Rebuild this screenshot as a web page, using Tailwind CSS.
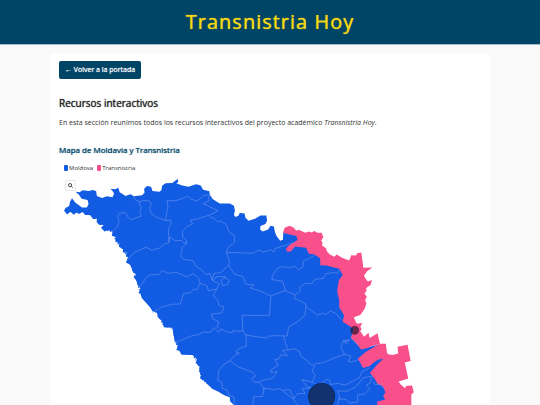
<!DOCTYPE html>
<html lang="es">
<head>
<meta charset="utf-8">
<meta name="viewport" content="width=device-width, initial-scale=1">
<title>Transnistria Hoy</title>
<script src="https://cdn.jsdelivr.net/npm/@tailwindcss/browser@4"></script>
</head>
<body class="bg-[#f9f9f9] font-['Open_Sans','Noto_Sans',sans-serif] text-[#333] overflow-x-hidden">
<header class="bg-[#004466] border-b border-[#a3bccb] h-[45px] flex items-center justify-center">
  <h1 class="text-[20px] leading-7 font-medium tracking-[1px] text-[#f6d915] [text-shadow:0_0_1px_currentColor]">Transnistria Hoy</h1>
</header>
<main class="mx-[50px] mt-2 p-2 pl-[9px] bg-white rounded-[4px]">
  <a href="#" class="flex w-fit items-center h-[18px] px-[6px] rounded-[2px] bg-[#004466] text-white text-[7px] font-medium [text-shadow:0_0_1px_currentColor]">← Volver a la portada</a>
  <h2 class="mt-4 text-[10px] leading-4 font-medium text-[#222] [text-shadow:0_0_1px_currentColor]">Recursos interactivos</h2>
  <p class="mt-[6px] text-[7px] leading-3">En esta sección reunimos todos los recursos interactivos del proyecto académico <em>Transnistria Hoy</em>.</p>
  <section class="mt-[15px]">
    <h3 class="text-[8px] leading-3 font-medium text-[#004466] [text-shadow:0_0_1px_currentColor]">Mapa de Moldavia y Transnistria</h3>
    <ul class="mt-[6px] ml-[5px] flex gap-1 text-[6px] leading-3">
      <li class="flex items-center gap-px"><span class="w-1 h-[6px] rounded-[1px] bg-[#125be3]"></span>Moldova</li>
      <li class="flex items-center gap-px"><span class="w-1 h-[6px] rounded-[1px] bg-[#f94f8a]"></span>Transnistria</li>
    </ul>
    <div class="relative">
      <button type="button" aria-label="Acercar" class="absolute left-[6px] top-[6px] size-[11px] bg-white border border-[#e8e8e8] rounded-[1px] flex items-center justify-center">
        <svg class="size-[5px]" viewBox="0 0 10 10" fill="none" stroke="#222" stroke-width="1.6"><circle cx="4.2" cy="4.2" r="3.2"/><path d="M6.5 6.5 9.5 9.5"/></svg>
      </button>
      <svg class="block w-full" viewBox="59 174 422 280" role="img" aria-label="Mapa de Moldavia y Transnistria">
        <g transform="scale(.3444 .3333)" stroke-linejoin="round">
          <path fill="#125be3" d="M219 575 231 577 240 571 257 573 270 570 279 574 281 588 296 594 310 589 326 592 331 581 327 574 320 566 334 568 343 563 347 577 359 584 363 588 379 583 388 589 412 586 419 578 418 566 426 558 438 560 442 573 462 575 468 571 470 557 480 550 500 549 507 543 515 537 517 546 511 550 526 556 546 560 568 553 581 556 589 569 607 574 608 584 617 598 637 610 666 610 678 617 681 632 678 645 683 651 691 647 695 639 709 640 711 652 720 662 739 656 755 646 772 646 774 662 769 672 755 678 754 689 762 694 777 688 784 677 794 679 796 693 801 707 812 722 820 719 821 698 870 705 900 720 932 778 1010 800 1012 960 1025 985 1018 1013 1048 1045 1102 1032 1130 1070 1140 1150 1150 1215 1120 1300 1000 1360 770 1360 700 1270 679 1215 667 1202 666 1190 650 1184 632 1173 615 1165 600 1149 589 1139 580 1134 583 1122 577 1113 579 1100 567 1087 571 1077 558 1064 526 1063 520 1051 511 1049 516 1037 507 1022 503 1003 500 982 475 981 470 963 457 950 456 938 442 933 435 921 411 893 407 880 402 878 407 864 399 855 397 843 387 830 395 824 385 814 378 794 365 787 372 771 365 769 367 757 356 757 357 747 345 740 346 730 335 724 335 711 324 707 327 696 314 690 303 694 293 683 301 675 287 674 280 665 282 656 270 657 261 645 247 645 240 636 229 642 222 637 214 644 204 635 195 643 186 632 190 624 201 618 203 606 209 595 219 608 238 622 252 622 257 612 254 600 237 596 229 584Z"/>
          <path fill="none" stroke="#125be3" stroke-width="3" stroke-dasharray="5 4 3 6" d="M189 632 204 632 222 634 240 634 261 642 282 658 303 688 327 696 337 724 357 747 369 769 378 794 387 814 397 843 407 880 435 918 457 940 475 978 501 984 507 1022 520 1051 558 1062 579 1100 583 1134 615 1162 666 1188 681 1215"/>
          <path fill="#f94f8a" d="M820 698 825 683 839 677 852 683 858 691 867 690 885 698 894 694 903 697 911 693 920 698 932 698 937 711 931 722 935 728 933 736 945 744 947 753 956 763 969 770 976 763 991 773 1012 781 1018 765 1032 766 1035 759 1047 757 1053 803 1079 802 1063 814 1055 826 1059 835 1066 844 1078 839 1074 854 1061 863 1062 873 1056 879 1063 890 1058 899 1062 910 1056 927 1044 944 1025 951 1034 970 1050 968 1044 979 1048 985 1044 993 1055 1009 1068 997 1071 1013 1094 999 1101 1030 1118 1030 1122 1061 1137 1064 1154 1059 1152 1039 1181 1033 1190 1082 1173 1086 1183 1134 1155 1143 1161 1152 1174 1163 1176 1157 1194 1155 1199 1175 1192 1182 1192 1220 1215 1290 1110 1290 1092 1204 1116 1197 1110 1185 1117 1176 1110 1158 1094 1151 1087 1137 1072 1117 1092 1094 1111 1075 1095 1078 1081 1088 1072 1097 1052 1103 1037 1074 1060 1055 1080 1042 1099 1032 1075 1038 1066 1043 1046 1047 1032 1027 1017 1013 1025 985 993 964 997 945 983 922 983 900 977 872 982 840 993 824 983 806 945 796 928 795 928 774 910 762 895 761 887 743 855 739 843 754 831 754 829 744 844 731 862 720 859 708 840 703Z"/>
        </g>
        <g transform="scale(.3444 .3333)" fill="none" stroke="#7097ee" stroke-width="1.7" stroke-linejoin="round">
          <path d="M388 589 392 600 406 605 403 614 411 621 405 634 409 648 394 654 380 659 372 652 363 637 346 640 341 648 345 664 340 681 324 696M406 605 416 601 433 603 439 611 434 624 438 640 455 652 480 661 495 660 496 673 488 686 490 727 476 732 462 744 440 750 423 741 409 748 389 757 372 778M480 661 483 638 487 620 484 602 510 602 526 596 544 588 553 597 572 603 583 594 592 586 609 585M605 588 606 602 589 611 606 619 632 632 608 645 570 657 552 660 558 671 542 680 529 693 530 711 540 720 542 729 529 740 524 769 534 778 559 781 568 798 580 806 600 824 609 820 615 841 620 820 641 817 650 806 663 796 665 782 656 758 661 742 680 727 679 706 663 695 657 675 641 663 630 665 622 656 607 650M490 727 492 711 507 721 526 721 533 728 542 729M658 757 734 759 750 750 764 756 783 749 795 755 797 745 826 736 854 727M402 860 414 848 422 834 433 824 460 823 471 811 486 819 512 817 529 824 541 830 560 820 576 834 580 849 601 857 603 871 628 867 636 851 618 842 626 830 649 829 664 841 660 853 645 856 641 839 655 829M442 937 469 920 499 912 523 911 532 880 551 878 563 865 570 870 580 849M663 796 680 822 704 829 713 852 737 854 725 863 753 872 785 887 781 945 741 945 702 945 704 992 692 993 674 991 672 998 652 992 640 985 634 996 620 982 610 996 590 995 575 1003 557 1006 508 1027M628 867 618 886 633 903 633 914 649 920 642 938 613 941 617 956 634 964 629 984M785 887 827 871 819 843 788 838 789 827 803 806 813 800 841 802 855 798 865 809 878 800 879 783 895 775 910 766M827 871 855 884 871 871 867 862 885 850 904 850 913 837 937 835 944 821 966 817 978 820 983 809M855 884 854 895 874 904 887 913 884 945 861 965 837 979 832 1007 790 1006 778 1008 773 1013 743 1009 713 1004 704 992M887 919 904 933 920 944 938 938 943 944 957 932 974 940 991 960M713 1004 714 1037 692 1045 683 1054 694 1059 680 1065 667 1081 649 1092 634 1111 631 1140 643 1145 645 1164 658 1168 663 1184 678 1190 679 1215M667 1081 689 1099 733 1116 741 1127 729 1134 738 1145 749 1145 765 1138 790 1134 803 1114 785 1116 786 1108 806 1095 797 1078 809 1075 814 1063 833 1066 818 1050 836 1049M822 1006 830 1037 836 1049 851 1045 869 1054 872 1068 892 1082 899 1091 912 1096 904 1111 914 1125 904 1145 921 1155 946 1137 956 1140 957 1152 980 1149 1001 1154 1042 1131 1048 1115 1071 1102M912 1090 935 1087 946 1083 970 1072 999 1062 1017 1067 1009 1082 1018 1085 1038 1078M999 1062 988 1042 995 1020 1014 1019 996 1025 1009 1030M749 1145 766 1162 761 1188 735 1189 733 1218M760 1165 776 1164 792 1168 811 1164 834 1183 849 1194 857 1207 867 1218M904 1145 875 1137 888 1157 901 1162 876 1165 884 1179 862 1180 852 1194 840 1168 821 1169M976 1218 985 1190 978 1171 1007 1172 1031 1159 1053 1132 1078 1127 1072 1148 1062 1154 1072 1165 1056 1181 1036 1183 1037 1204 1014 1208 1003 1197 979 1195M1080 1142 1087 1152 1102 1151 1114 1165"/>
        </g>
        <circle cx="321" cy="396" r="13" fill="#11326f" stroke="#0d2a5c"/>
        <circle cx="354" cy="330" r="4" fill="#1f1226" fill-opacity=".65" stroke="#3b1a3b" stroke-width=".4"/>
      </svg>
    </div>
  </section>
</main>
</body>
</html>
